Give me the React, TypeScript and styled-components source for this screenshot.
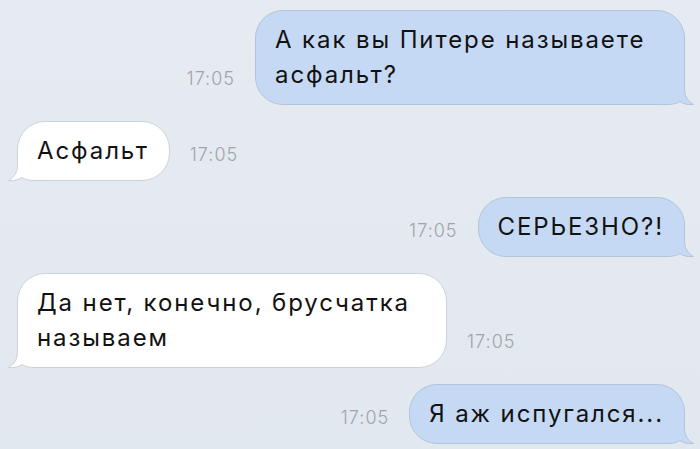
import React from "react";
import styled, { createGlobalStyle } from "styled-components";

const Global = createGlobalStyle`
  html, body { margin: 0; padding: 0; background: #e4eaf0; }
  body { font-family: Inter, "Liberation Sans", sans-serif; }
`;

const Screen = styled.div`
  width: 700px;
  height: 449px;
  box-sizing: border-box;
  padding: 10px 15px 0 17px;
  display: flex;
  flex-direction: column;
  gap: 16px;
  overflow: hidden;
  background: linear-gradient(180deg, #e5ebf1 0%, #e2e8ef 100%);
`;

const Row = styled.div<{ $out?: boolean }>`
  display: flex;
  align-items: flex-end;
  justify-content: ${(p) => (p.$out ? "flex-end" : "flex-start")};
  gap: 20px;
`;

const Bubble = styled.div<{ $out?: boolean }>`
  position: relative;
  max-width: 430px;
  box-sizing: border-box;
  padding: 11px 20px 12px 19px;
  border-radius: 28px;
  background: ${(p) => (p.$out ? "#c6d9f4" : "#ffffff")};
  border: 1px solid ${(p) => (p.$out ? "#b3c4da" : "#cbd2da")};
`;

const BubbleText = styled.span`
  position: relative;
  z-index: 1;
  font-family: Inter, "Liberation Sans", sans-serif;
  font-size: 24px;
  line-height: 35px;
  letter-spacing: 1.9px;
  color: #121212;
`;

const TailSvg = styled.svg<{ $out?: boolean }>`
  position: absolute;
  bottom: -1px;
  width: 36px;
  height: 29px;
  overflow: visible;
  z-index: 0;
  ${(p) => (p.$out ? "right: -11px;" : "left: -11px; transform: scaleX(-1);")}
`;

const Time = styled.span`
  font-family: Inter, "Liberation Sans", sans-serif;
  font-weight: 300;
  font-size: 18px;
  letter-spacing: 1px;
  line-height: 1;
  color: #9ea4ab;
  margin-bottom: 17px;
  white-space: nowrap;
`;

const Tail: React.FC<{ out?: boolean }> = ({ out }) => {
  const fill = out ? "#c6d9f4" : "#ffffff";
  const stroke = out ? "#b3c4da" : "#cbd2da";
  return (
    <TailSvg $out={out} viewBox="0 0 36 29">
      <path
        d="M0 0 H25.5 V12 C25.5 20 28 24.5 34.5 28.5 C29 29 24 28 21 25.5 C18 27.5 14 28.5 8 28.5 H0 Z"
        fill={fill}
      />
      <path
        d="M0 28.5 H8 C14 28.5 18 27.5 21 25.5 C24 28 29 29 34.5 28.5 C28 24.5 25.5 20 25.5 12 V0"
        fill="none"
        stroke={stroke}
        strokeWidth="1"
      />
    </TailSvg>
  );
};

type Msg = { out: boolean; text: string; time: string };

const messages: Msg[] = [
  { out: true, text: "А как вы Питере называете асфальт?", time: "17:05" },
  { out: false, text: "Асфальт", time: "17:05" },
  { out: true, text: "СЕРЬЕЗНО?!", time: "17:05" },
  { out: false, text: "Да нет, конечно, брусчатка называем", time: "17:05" },
  { out: true, text: "Я аж испугался...", time: "17:05" },
];

export default function App() {
  return (
    <>
      <Global />
      <Screen>
        {messages.map((m, i) => (
          <Row key={i} $out={m.out}>
            {m.out && <Time>{m.time}</Time>}
            <Bubble $out={m.out}>
              <Tail out={m.out} />
              <BubbleText>{m.text}</BubbleText>
            </Bubble>
            {!m.out && <Time>{m.time}</Time>}
          </Row>
        ))}
      </Screen>
    </>
  );
}
